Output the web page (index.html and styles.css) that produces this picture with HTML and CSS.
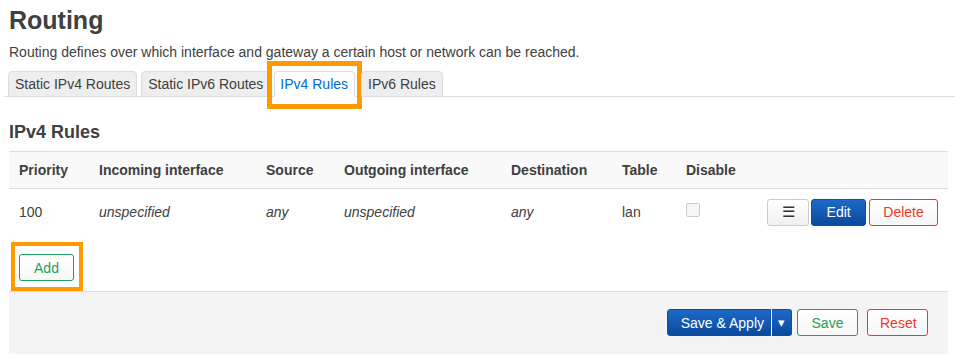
FILE: index.html
```html
<!DOCTYPE html>
<html lang="en">
<head>
    <meta charset="UTF-8">
    <meta name="viewport" content="width=device-width, initial-scale=1.0">
    <title>Routing</title>
    <link rel="stylesheet" href="styles.css">
</head>
<body>
    <div class="main">
        <h2>Routing</h2>
        <div class="map-descr">Routing defines over which interface and gateway a certain host or network can be reached.</div>

        <ul class="tabs">
            <li class="tab">Static IPv4 Routes</li>
            <li class="tab">Static IPv6 Routes</li>
            <li class="tab active mark">IPv4 Rules</li>
            <li class="tab">IPv6 Rules</li>
        </ul>

        <div class="section">
            <h3>IPv4 Rules</h3>
            <table class="rules">
                <tr class="head">
                    <th class="c-prio">Priority</th>
                    <th class="c-in">Incoming interface</th>
                    <th class="c-src">Source</th>
                    <th class="c-out">Outgoing interface</th>
                    <th class="c-dst">Destination</th>
                    <th class="c-table">Table</th>
                    <th class="c-dis">Disable</th>
                    <th></th>
                </tr>
                <tr>
                    <td>100</td>
                    <td><em>unspecified</em></td>
                    <td><em>any</em></td>
                    <td><em>unspecified</em></td>
                    <td><em>any</em></td>
                    <td>lan</td>
                    <td><span class="checkbox"></span></td>
                    <td class="actions">
                        <button class="btn btn-menu">&#9776;</button>
                        <button class="btn btn-edit">Edit</button>
                        <button class="btn btn-del">Delete</button>
                    </td>
                </tr>
            </table>
            <div class="add-row">
                <span class="mark mark-add"><button class="btn btn-add">Add</button></span>
            </div>
        </div>

        <div class="page-actions">
            <div class="btn-split">
                <button class="btn btn-apply">Save &amp; Apply</button><button class="btn btn-apply btn-caret">&#9662;</button>
            </div>
            <button class="btn btn-save">Save</button>
            <button class="btn btn-reset">Reset</button>
        </div>
    </div>
</body>
</html>
```

FILE: styles.css
```css
body, html {
    margin: 0;
    padding: 0;
    font-family: 'Liberation Sans', Arial, sans-serif;
    font-size: 14px;
    color: #404040;
    background: #fff;
}

.main {
    padding: 0 7px 0 9px;
}

h2 {
    margin: 0;
    padding-top: 5px;
    font-size: 25px;
    line-height: 30px;
    font-weight: bold;
    color: #404040;
}

.map-descr {
    margin-top: 7px;
    line-height: 20px;
}

/* tabs */
.tabs {
    list-style: none;
    display: flex;
    margin: 9px -7px 0 -5px;
    padding: 0 0 0 4px;
    border-bottom: 1px solid #ddd;
}
.tab {
    position: relative;
    height: 24px;
    line-height: 24px;
    padding: 0 6px;
    margin: 0 4px -1px 0;
    background: #eee;
    border: 1px solid #ddd;
    border-radius: 4px 4px 0 0;
    color: #404040;
}
.tab.active {
    background: #fff;
    border-bottom-color: #fff;
    color: #0069d6;
    padding: 0 6px 0 5px;
    margin-right: 6px;
}

/* orange annotation frames */
.mark {
    position: relative;
}
.tab.mark::after {
    content: "";
    position: absolute;
    left: -8px;
    right: -8px;
    top: -11px;
    bottom: -13px;
    border: 5px solid #ff9900;
}

.section h3 {
    margin: 24px 0 0 0;
    font-size: 18px;
    line-height: 22px;
    font-weight: bold;
    color: #404040;
}

/* table */
.rules {
    width: 100%;
    border-collapse: collapse;
    margin-top: 8px;
}
.rules th, .rules td {
    text-align: left;
    padding: 0 10px;
    white-space: nowrap;
}
.rules .head {
    background: #f9f9f9;
    border-top: 1px solid #ddd;
    border-bottom: 1px solid #ddd;
}
.rules th {
    height: 36px;
    font-weight: bold;
}
.rules td {
    height: 46px;
}
.c-prio { width: 60px; }
.c-in { width: 147px; }
.c-src { width: 58px; }
.c-out { width: 147px; }
.c-dst { width: 91px; }
.c-table { width: 44px; }
.c-dis { width: 60px; }

.checkbox {
    display: inline-block;
    width: 12px;
    height: 12px;
    border: 1px solid #ccc;
    border-radius: 2px;
    background: #f6f6f6;
    vertical-align: -3px;
    position: relative;
    top: -3px;
}

.rules td.actions {
    text-align: right;
    padding-right: 10px;
}

/* buttons */
.btn {
    font-family: inherit;
    font-size: 14px;
    height: 27px;
    padding: 0 12px;
    border: 1px solid #ccc;
    border-radius: 3px;
    background: linear-gradient(#fff, #f0f0f0);
    color: #404040;
    cursor: pointer;
    vertical-align: middle;
}
.btn-menu {
    width: 42px;
    margin-right: 0;
    font-size: 15px;
    color: #333;
}
.btn-edit {
    width: 55px;
    margin-right: -1px;
    margin-left: -2px;
    background: linear-gradient(#1e68c6, #0a4a9e);
    border-color: #0b4ea5;
    color: #fff;
}
.btn-del {
    width: 69px;
    border-color: #ee3a25;
    color: #ee3a25;
    background: linear-gradient(#fff, #f7f7f7);
}

.add-row {
    padding: 19px 0 10px 10px;
}
.mark-add {
    display: inline-block;
}
.mark-add::after {
    content: "";
    position: absolute;
    left: -8px;
    right: -9px;
    top: -12px;
    bottom: -10px;
    border: 4px solid #ff9900;
}
.btn-add {
    width: 55px;
    border-color: #1aa35a;
    color: #1aa35a;
    background: linear-gradient(#fff, #f7f7f7);
    display: block;
}

/* page actions */
.page-actions {
    background: #f4f4f4;
    border-top: 1px solid #ddd;
    height: 63px;
    display: flex;
    justify-content: flex-end;
    align-items: flex-start;
    padding: 17px 20px 0 0;
    box-sizing: border-box;
    gap: 5px;
}
.btn-split {
    display: flex;
}
.btn-apply {
    background: linear-gradient(#1e68c6, #0a4a9e);
    border-color: #0b4ea5;
    color: #fff;
    padding: 0 6px 0 13px;
    border-radius: 3px 0 0 3px;
}
.btn-caret {
    padding: 0 6px;
    border-left: 1px solid #fff;
    border-radius: 0 3px 3px 0;
    font-size: 13px;
}
.btn-save {
    width: 61px;
    border-color: #1aa35a;
    color: #1aa35a;
    background: linear-gradient(#fff, #f7f7f7);
}
.btn-reset {
    width: 61px;
    margin-left: 4px;
    border-color: #ee3a25;
    color: #ee3a25;
    background: linear-gradient(#fff, #f7f7f7);
}
```
